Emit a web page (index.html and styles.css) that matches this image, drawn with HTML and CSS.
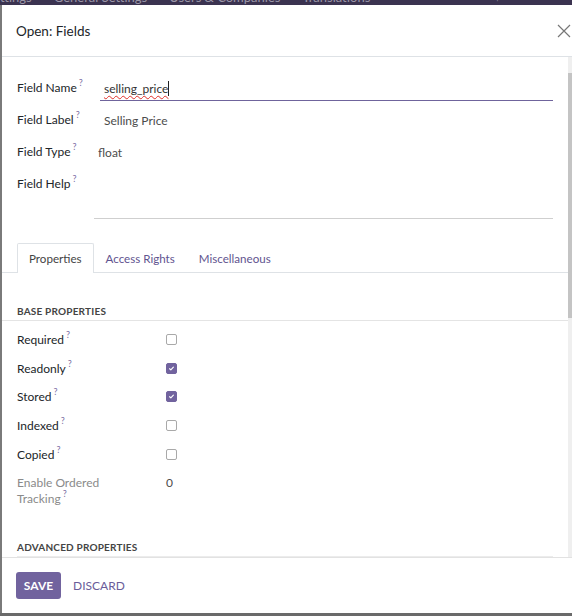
FILE: index.html
```html
<!DOCTYPE html>
<html>
<head>
<meta charset="utf-8">
<link rel="stylesheet" href="styles.css">
</head>
<body>
<div class="navbar"><div class="nav-inner"><span>ttings</span><span>General Settings</span><span>Users &amp; Companies</span><span>Translations</span><span class="nav-right">✦</span></div></div>
<div class="stage">
  <div class="backdrop-strip"></div>
  <div class="modal">
    <div class="modal-header">
      <h4 class="modal-title">Open: Fields</h4>
      <svg class="close" width="14" height="14" viewBox="0 0 14 14"><path d="M1 1 L13 13 M13 1 L1 13" stroke="#777" stroke-width="1.2" fill="none"/></svg>
    </div>
    <div class="modal-body">
      <div class="body-content">
        <div class="sheet">
          <div class="frow">
            <div class="flabel">Field Name<sup>?</sup></div>
            <div class="fval input-wrap"><span class="typed">selling_price</span><span class="caret"></span></div>
          </div>
          <div class="frow">
            <div class="flabel">Field Label<sup>?</sup></div>
            <div class="fval val-label">Selling Price</div>
          </div>
          <div class="frow">
            <div class="flabel">Field Type<sup>?</sup></div>
            <div class="fval val-type">float</div>
          </div>
          <div class="frow help-row">
            <div class="flabel">Field Help<sup>?</sup></div>
            <div class="fval textarea"></div>
          </div>

          <div class="tabs">
            <div class="tab active">Properties</div>
            <div class="tab">Access Rights</div>
            <div class="tab">Miscellaneous</div>
          </div>

          <div class="section-title">BASE PROPERTIES</div>
          <div class="props">
            <div class="prow"><div class="plabel">Required<sup>?</sup></div><div class="pval"><span class="cb"></span></div></div>
            <div class="prow"><div class="plabel">Readonly<sup>?</sup></div><div class="pval"><span class="cb checked"><svg width="11" height="11" viewBox="0 0 11 11"><path d="M3.2 5.8 L4.7 7.1 L7.8 3.9" stroke="#fff" stroke-width="1.4" fill="none" stroke-linecap="round" stroke-linejoin="round"/></svg></span></div></div>
            <div class="prow"><div class="plabel">Stored<sup>?</sup></div><div class="pval"><span class="cb checked"><svg width="11" height="11" viewBox="0 0 11 11"><path d="M3.2 5.8 L4.7 7.1 L7.8 3.9" stroke="#fff" stroke-width="1.4" fill="none" stroke-linecap="round" stroke-linejoin="round"/></svg></span></div></div>
            <div class="prow"><div class="plabel">Indexed<sup>?</sup></div><div class="pval"><span class="cb"></span></div></div>
            <div class="prow"><div class="plabel">Copied<sup>?</sup></div><div class="pval"><span class="cb"></span></div></div>
            <div class="prow tall"><div class="plabel muted">Enable Ordered<br>Tracking<sup>?</sup></div><div class="pval num">0</div></div>
          </div>
          <div class="section-title adv">ADVANCED PROPERTIES</div>
          <div class="filler"></div>
        </div>
      </div>
      <div class="scrollbar"><div class="thumb"></div></div>
    </div>
    <div class="modal-footer">
      <button class="btn-save">SAVE</button>
      <button class="btn-discard">DISCARD</button>
    </div>
  </div>
</div>
<div class="bottom-strip"></div>
</body>
</html>
```

FILE: styles.css
```css
* { box-sizing: border-box; }
html, body { margin: 0; padding: 0; }
body {
  width: 572px;
  height: 616px;
  overflow: hidden;
  background: #6f6f6f;
  font-family: "Lato", "Open Sans", sans-serif;
  font-size: 12px;
  color: #333;
}
.navbar {
  height: 5px;
  background: #3b3350;
  overflow: hidden;
}
.nav-inner {
  display: flex;
  gap: 22px;
  margin-top: -10px;
  color: #9c97a8;
  font-size: 13px;
  line-height: 14px;
  white-space: nowrap;
}
.nav-right { margin-left: 100px; }
.stage {
  display: flex;
  height: 608px;
}
.backdrop-strip {
  width: 2px;
  background: #7a7a7a;
}
.modal {
  width: 570px;
  background: #fff;
  display: flex;
  flex-direction: column;
}
.bottom-strip {
  height: 3px;
  background: #6a6a6a;
}
.modal-header {
  height: 52px;
  flex: none;
  display: flex;
  align-items: center;
  justify-content: space-between;
  padding: 0 1px 0 14px;
  border-bottom: 1px solid #dee2e6;
}
.modal-title {
  margin: 0;
  font-weight: 400;
  font-size: 13.5px;
  color: #212529;
}
.close { margin-top: 1px; }
.modal-body {
  flex: 1;
  display: flex;
  min-height: 0;
}
.body-content {
  flex: 1;
  overflow: hidden;
}
.scrollbar {
  width: 4px;
  flex: none;
  background: #efefef;
}
.thumb {
  margin-top: 16px;
  height: 245px;
  background: #c4c4c4;
}
.sheet {
  padding: 14px 15px 0 15px;
}
.frow {
  display: flex;
  height: 32px;
  align-items: center;
}
.flabel {
  width: 77px;
  flex: none;
  color: #212529;
  white-space: nowrap;
}
sup {
  color: #7c6fa5;
  font-size: 9px;
  margin-left: 2px;
  vertical-align: 6px;
  line-height: 0;
}
.fval { flex: 1; }
.input-wrap {
  margin-left: 6px;
  height: 24px;
  margin-top: 4px;
  border-bottom: 1px solid #6f649c;
  padding-left: 4px;
  display: flex;
  align-items: center;
  color: #333;
}
.typed {
  text-decoration: underline wavy #e0302a;
  text-decoration-thickness: 1px;
  text-underline-offset: 2px;
}
.caret {
  display: inline-block;
  width: 1px;
  height: 15px;
  background: #222;
}
.val-label { padding-left: 10px; color: #4c4c4c; padding-top: 2px; }
.val-type { padding-left: 4px; color: #4c4c4c; padding-top: 2px; }
.help-row {
  height: 52px;
  align-items: flex-start;
}
.help-row .flabel { padding-top: 9px; }
.textarea {
  height: 52px;
  border-bottom: 1px solid #cfcfcf;
}
.tabs {
  display: flex;
  margin: 24px -15px 0 -15px;
  padding-left: 15px;
  border-bottom: 1px solid #dee2e6;
  font-size: 11.6px;
}
.tab {
  height: 29px;
  display: flex;
  align-items: center;
  padding: 0 11px;
  color: #5f548f;
  border: 1px solid transparent;
  border-bottom: none;
  margin-bottom: -1px;
  border-radius: 2px 2px 0 0;
}
.tab.active {
  border-color: #dee2e6;
  background: #fff;
  height: 30px;
  color: #444;
}
.section-title {
  margin: 32px -15px 0 -15px;
  padding: 0 0 3px 15px;
  font-weight: 700;
  font-size: 10px;
  letter-spacing: 0.2px;
  color: #444;
  border-bottom: 1px solid #e4e4e4;
}
.props { padding-top: 4px; }
.prow {
  display: flex;
  height: 28.75px;
  align-items: center;
}
.prow.tall {
  height: 40px;
  align-items: flex-start;
  padding-top: 6px;
}
.plabel {
  width: 149px;
  flex: none;
  color: #212529;
  white-space: nowrap;
}
.plabel.muted {
  line-height: 16.5px;
  color: #8a8a8a;
}
.pval { display: flex; align-items: center; }
.num { color: #4c4c4c; line-height: 16.5px; }
.cb {
  width: 11px;
  height: 11px;
  border: 1px solid #a9a9a9;
  border-radius: 2px;
  display: inline-flex;
  align-items: center;
  justify-content: center;
  background: #fff;
}
.cb.checked {
  background: #71639e;
  border-color: #71639e;
}
.cb svg { display: block; }
.section-title.adv {
  margin: 32px 0 0 0;
  padding-left: 0;
  padding-bottom: 3px;
  border-bottom: 3px solid #ececec;
}
.filler { height: 30px; }
.modal-footer {
  height: 56px;
  flex: none;
  border-top: 1px solid #e2e2e2;
  display: flex;
  align-items: center;
  padding: 0 14px;
  gap: 2px;
}
.btn-save {
  font-family: inherit;
  background: #71639e;
  color: #fff;
  border: none;
  border-radius: 3px;
  height: 27px;
  width: 45px;
  font-weight: 700;
  font-size: 12px;
  padding: 0;
}
.btn-discard {
  font-family: inherit;
  background: none;
  border: none;
  color: #6a5d9a;
  font-size: 12px;
  padding: 0 10px;
  height: 27px;
}
```
